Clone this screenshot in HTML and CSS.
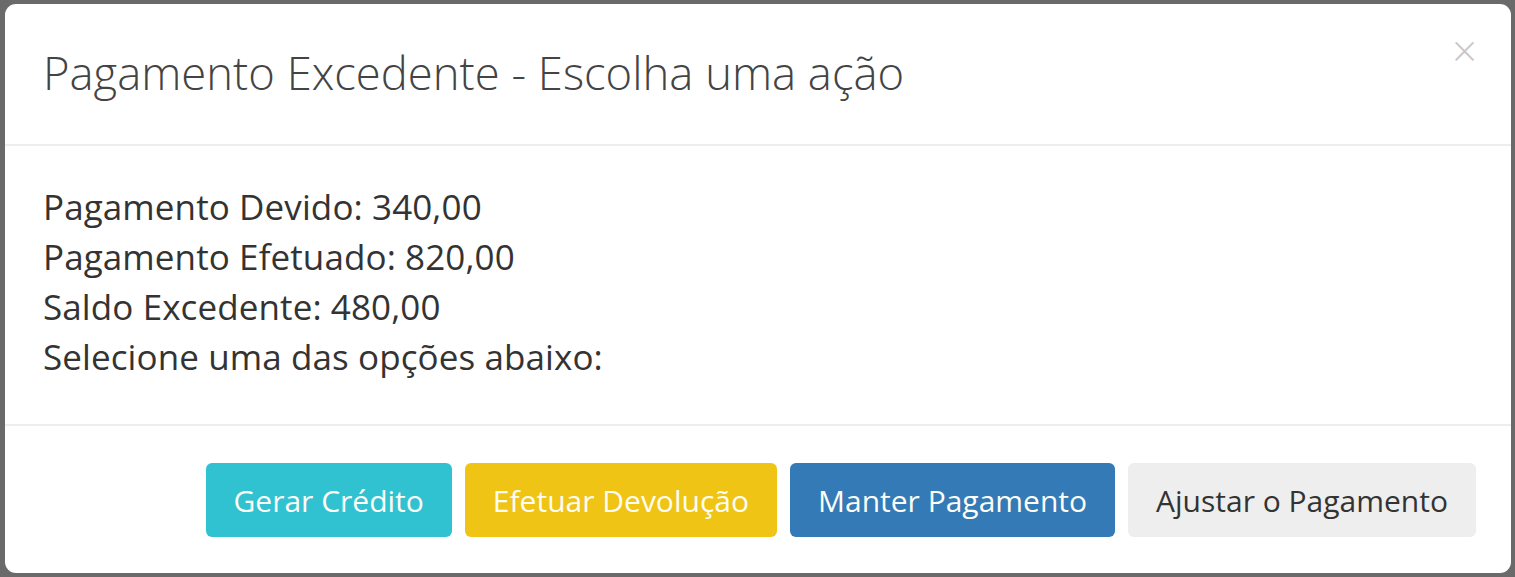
FILE: index.html
```html
<!DOCTYPE html>
<html lang="pt-BR">
<head>
    <meta charset="UTF-8">
    <title>Pagamento Excedente</title>
    <link rel="stylesheet" href="styles.css">
</head>
<body>

<div class="modal">
    <div class="modal-header">
        <h4 class="modal-title">Pagamento Excedente - Escolha uma ação</h4>
        <button class="close" type="button">&times;</button>
    </div>
    <div class="modal-body">
        <div>Pagamento Devido: 340,00</div>
        <div>Pagamento Efetuado: 820,00</div>
        <div>Saldo Excedente: 480,00</div>
        <div>Selecione uma das opções abaixo:</div>
    </div>
    <div class="modal-footer">
        <button class="btn btn-info">Gerar Crédito</button>
        <button class="btn btn-warning">Efetuar Devolução</button>
        <button class="btn btn-primary">Manter Pagamento</button>
        <button class="btn btn-default">Ajustar o Pagamento</button>
    </div>
</div>

</body>
</html>
```

FILE: styles.css
```css
html, body {
    height: 100%;
}

body {
    margin: 0;
    padding: 4px 4px 4px 5px;
    box-sizing: border-box;
    background-color: #6a6a6a;
    font-family: "Open Sans", sans-serif;
    color: #333;
}

.modal {
    height: 100%;
    background-color: #fff;
    border-radius: 11px;
    display: flex;
    flex-direction: column;
    overflow: hidden;
}

.modal-header {
    position: relative;
    height: 142px;
    padding: 0 38px;
    box-sizing: border-box;
    border-bottom: 2px solid #eee;
    display: flex;
    align-items: center;
}

.modal-title {
    margin: 0 0 4px 0;
    font-size: 45.4px;
    font-weight: 300;
    color: #444;
}

.close {
    position: absolute;
    top: 24px;
    right: 34px;
    background: none;
    border: none;
    padding: 0;
    font-family: "Open Sans", sans-serif;
    font-size: 44px;
    font-weight: 300;
    line-height: 1;
    color: #c8c8c8;
    cursor: pointer;
}

.modal-body {
    height: 280px;
    padding: 36px 38px;
    box-sizing: border-box;
    border-bottom: 2px solid #eee;
    font-size: 35px;
    line-height: 50px;
    letter-spacing: 0.1px;
}

.modal-footer {
    flex: 1;
    display: flex;
    justify-content: flex-end;
    align-items: flex-start;
    gap: 13px;
    padding: 37px 35px 0 0;
}

.btn {
    height: 74px;
    padding: 0 28px;
    border: none;
    border-radius: 6px;
    font-family: "Open Sans", sans-serif;
    font-size: 30px;
    color: #fdfdf5;
    cursor: pointer;
}

.btn-info {
    background-color: #31c2d2;
}

.btn-warning {
    background-color: #f0c415;
}

.btn-primary {
    background-color: #337ab7;
}

.btn-default {
    background-color: #eeeeee;
    color: #333;
}
```
